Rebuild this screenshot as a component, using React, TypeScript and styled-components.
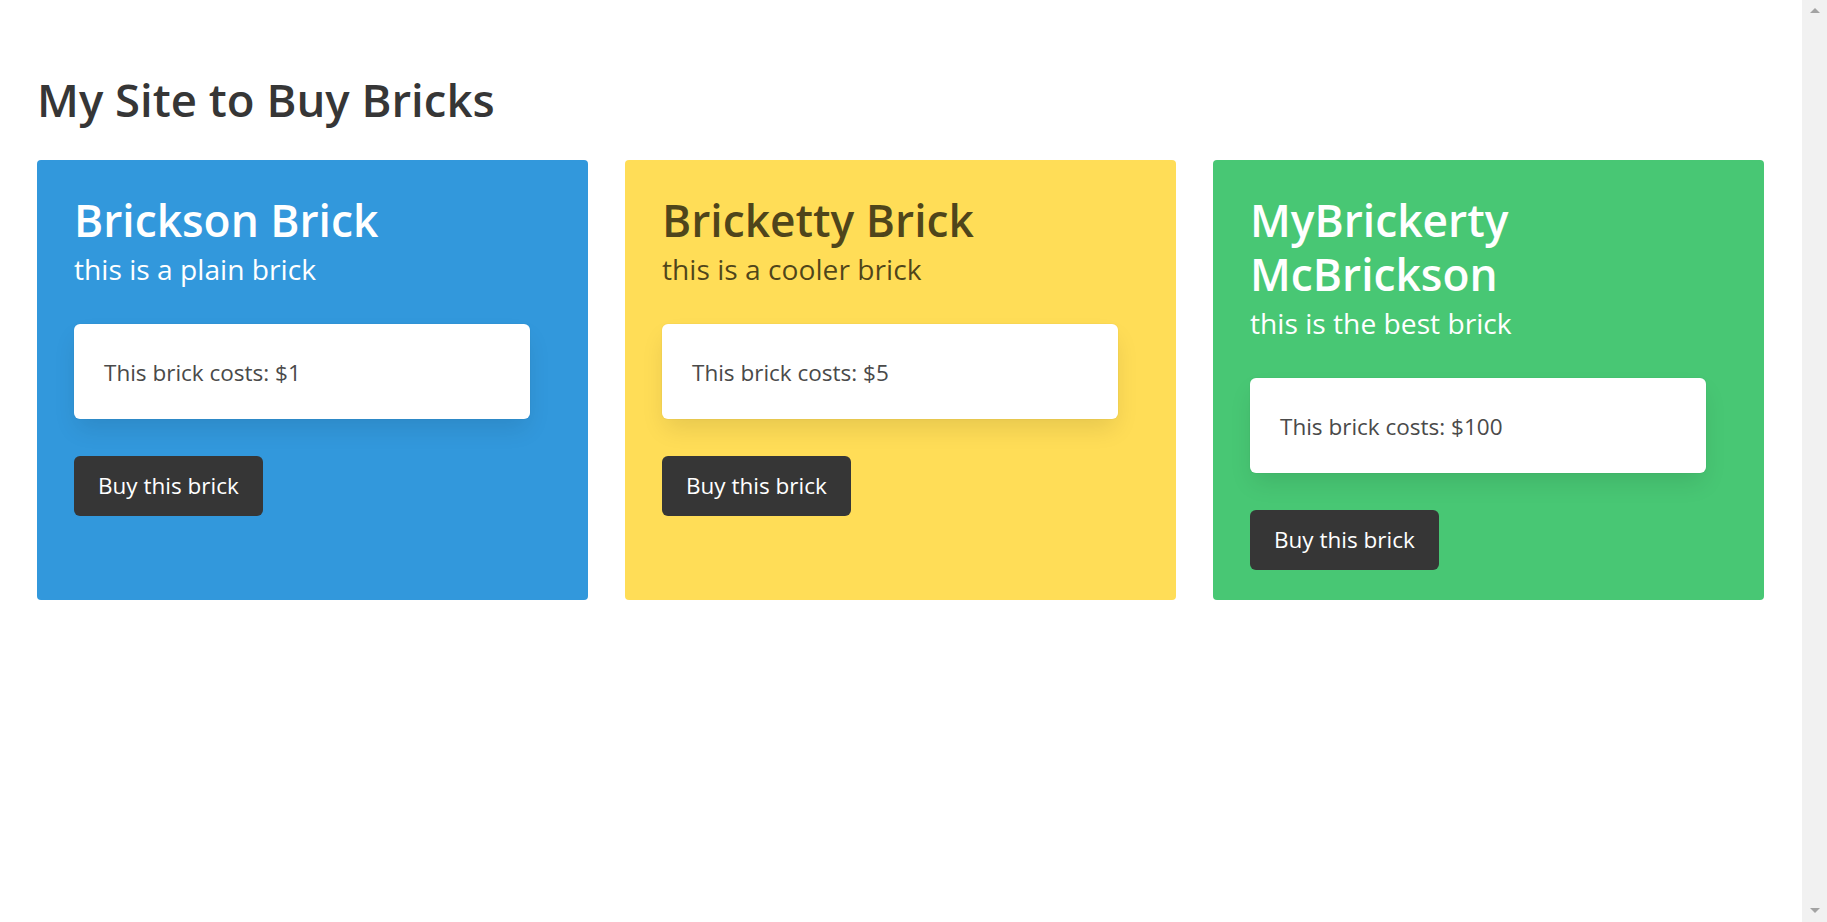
import React from "react";
import styled, { createGlobalStyle } from "styled-components";

const Global = createGlobalStyle`
  html { background: #fff; }
  body {
    margin: 0;
    font-family: "Open Sans", "Noto Sans", "Liberation Sans", sans-serif;
    color: #4a4a4a;
    -webkit-font-smoothing: antialiased;
  }
  * { box-sizing: border-box; }
`;

const Page = styled.main`
  padding: 72px 0 40px 37px;
`;

const PageTitle = styled.h1`
  margin: 0 0 34px;
  font-size: 45.5px;
  font-weight: 600;
  line-height: 54px;
  color: #363636;
`;

const Grid = styled.div`
  display: grid;
  grid-template-columns: repeat(3, 551px);
  column-gap: 37px;
  align-items: stretch;
`;

const Card = styled.section<{ $bg: string; $fg: string }>`
  display: flex;
  flex-direction: column;
  align-items: flex-start;
  padding: 33px 37px 30px;
  border-radius: 4px;
  background: ${(p) => p.$bg};
  color: ${(p) => p.$fg};
`;

const CardTitle = styled.h2`
  margin: 0;
  font-size: 44.3px;
  font-weight: 600;
  line-height: 54px;
  color: inherit;
`;

const CardSubtitle = styled.p`
  margin: 2px 0 0;
  font-size: 28.2px;
  font-weight: 400;
  line-height: 40px;
  color: inherit;
`;

const PriceBox = styled.div`
  width: 456px;
  margin-top: 35px;
  padding: 31px 30px 29px;
  border-radius: 6px;
  background: #fff;
  color: #4a4a4a;
  font-size: 22.5px;
  line-height: 35px;
  box-shadow: 0 12px 24px -3px rgba(10, 10, 10, 0.1), 0 0 0 1px rgba(10, 10, 10, 0.02);
`;

const BuyButton = styled.button`
  margin-top: 37px;
  padding: 11px 23px;
  border: 1px solid transparent;
  border-radius: 6px;
  background: #363636;
  color: #fff;
  font-family: inherit;
  font-size: 22.5px;
  line-height: 36px;
  cursor: pointer;
`;

/* Imitation of the browser's empty vertical scrollbar, drawn over the page edge */
const ScrollTrack = styled.div`
  position: fixed;
  top: 0;
  right: 0;
  bottom: 0;
  width: 25px;
  display: flex;
  flex-direction: column;
  justify-content: space-between;
  align-items: center;
  padding: 8px 0 9px;
  background: #f1f1f1;
`;

const Arrow = styled.span<{ $down?: boolean }>`
  width: 0;
  height: 0;
  border-left: 5px solid transparent;
  border-right: 5px solid transparent;
  ${(p) => (p.$down ? "border-top: 5px solid #a3a3a3;" : "border-bottom: 5px solid #a3a3a3;")}
`;

type Brick = {
  name: string;
  description: string;
  price: number;
  bg: string;
  fg: string;
};

const bricks: Brick[] = [
  { name: "Brickson Brick", description: "this is a plain brick", price: 1, bg: "#3298dc", fg: "#fff" },
  { name: "Bricketty Brick", description: "this is a cooler brick", price: 5, bg: "#ffdd57", fg: "rgba(0, 0, 0, 0.7)" },
  { name: "MyBrickerty McBrickson", description: "this is the best brick", price: 100, bg: "#48c774", fg: "#fff" },
];

export default function App() {
  return (
    <>
      <Global />
      <Page>
        <PageTitle>My Site to Buy Bricks</PageTitle>
        <Grid>
          {bricks.map((b) => (
            <Card key={b.name} $bg={b.bg} $fg={b.fg}>
              <CardTitle>{b.name}</CardTitle>
              <CardSubtitle>{b.description}</CardSubtitle>
              <PriceBox>This brick costs: ${b.price}</PriceBox>
              <BuyButton type="button">Buy this brick</BuyButton>
            </Card>
          ))}
        </Grid>
      </Page>
      <ScrollTrack aria-hidden="true">
        <Arrow />
        <Arrow $down />
      </ScrollTrack>
    </>
  );
}
